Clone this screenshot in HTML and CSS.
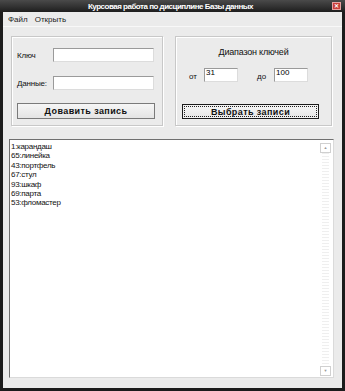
FILE: index.html
```html
<!DOCTYPE html>
<html lang="ru">
<head>
    <meta charset="UTF-8">
    <title>Курсовая работа по дисциплине Базы данных</title>
    <link rel="stylesheet" href="styles.css">
</head>
<body>
    <div class="window">
        <div class="titlebar">
            <span></span>
            <span class="title">Курсовая работа по дисциплине Базы данных</span>
            <span class="close">&#x2715;</span>
        </div>
        <div class="frame">
            <div class="menubar">
                <span>Файл</span>
                <span>Открыть</span>
            </div>
            <div class="content">
                <div class="groups">
                    <div class="group addGroup">
                        <div class="fieldRow">
                            <label for="keyInput">Ключ</label>
                            <input type="text" id="keyInput" class="field">
                        </div>
                        <div class="fieldRow">
                            <label for="dataInput">Данные:</label>
                            <input type="text" id="dataInput" class="field">
                        </div>
                        <button class="winButton">Довавить запись</button>
                    </div>
                    <div class="group rangeGroup">
                        <div class="rangeTitle">Диапазон ключей</div>
                        <div class="rangeRow">
                            <span class="rangeLabel">от</span>
                            <input type="text" class="field small" value="31">
                            <span class="rangeLabel to">до</span>
                            <input type="text" class="field small" value="100">
                        </div>
                        <button class="winButton focused">Выбрать записи</button>
                    </div>
                </div>
                <div class="listBox">
                    <ul class="items">
                        <li>1:карандаш</li>
                        <li>65:линейка</li>
                        <li>43:портфель</li>
                        <li>67:стул</li>
                        <li>93:шкаф</li>
                        <li>69:парта</li>
                        <li>53:фломастер</li>
                    </ul>
                    <div class="scrollbar">
                        <div class="arrow">&#9650;</div>
                        <div class="track"></div>
                        <div class="arrow">&#9660;</div>
                    </div>
                </div>
            </div>
        </div>
    </div>
</body>
</html>
```

FILE: styles.css
```css
* {
  box-sizing: border-box;
  margin: 0;
  padding: 0;
  list-style: none;
}

body {
  width: 345px;
  height: 391px;
  overflow: hidden;
  background-color: #ffffff;
  font-family: "Liberation Sans", Arial, sans-serif;
  font-size: 8px;
  color: #111111;
}

.window {
  width: 345px;
  height: 391px;
  display: flex;
  flex-direction: column;
}

.titlebar {
  height: 12px;
  display: grid;
  grid-template-columns: 1fr auto 1fr;
  align-items: center;
  background: linear-gradient(#4a4a4a, #1e1e1e);
  padding: 0 4px 0 0;
}

.title {
  color: #ffffff;
  font-weight: bold;
  font-size: 8px;
  letter-spacing: -0.5px;
}

.close {
  justify-self: end;
  width: 9px;
  height: 8px;
  background-color: #c8403a;
  border: 1px solid #e8a0a0;
  color: #ffffff;
  font-size: 6px;
  line-height: 6px;
  text-align: center;
  font-weight: bold;
}

.frame {
  flex: 1;
  display: flex;
  flex-direction: column;
  background-color: #ebebeb;
  border-left: 3px solid #1c1c1c;
  border-right: 3px solid #1c1c1c;
  border-bottom: 3px solid #1c1c1c;
}

.menubar {
  height: 15px;
  display: flex;
  align-items: center;
  gap: 7px;
  padding-left: 5px;
  border-bottom: 1px solid #f8f8f8;
  font-size: 8px;
  color: #222222;
}

.content {
  flex: 1;
  display: flex;
  flex-direction: column;
  padding: 9px 8px 6px 6px;
}

.groups {
  display: flex;
  gap: 12px;
  margin: 0 2px;
  height: 90px;
}

.group {
  border: 1px solid #c8c8c8;
  box-shadow: inset 1px 1px 0 #ffffff, 1px 1px 0 #ffffff;
}

.addGroup {
  width: 152px;
  padding: 11px 0 0 5px;
}

.fieldRow {
  display: flex;
  align-items: center;
  margin-bottom: 14px;
}

.fieldRow label {
  width: 36px;
  font-size: 8px;
  letter-spacing: -0.2px;
}

.field {
  height: 14px;
  width: 101px;
  background-color: #ffffff;
  border: 1px solid #9a9a9a;
  border-right-color: #dcdcdc;
  border-bottom-color: #dcdcdc;
  font-family: "Liberation Sans", Arial, sans-serif;
  font-size: 8px;
  padding: 0 2px 4px;
  outline: 0;
}

.winButton {
  display: block;
  width: 138px;
  height: 16px;
  margin-top: -1px;
  background: linear-gradient(#f6f6f6, #e4e4e4);
  border: 1px solid #7a7a7a;
  font-family: "Liberation Sans", Arial, sans-serif;
  font-weight: bold;
  font-size: 9px;
  letter-spacing: 0.4px;
  color: #111111;
}

.rangeGroup {
  width: 157px;
  padding: 10px 0 0 6px;
}

.rangeTitle {
  text-align: center;
  font-size: 9px;
  letter-spacing: -0.2px;
  margin-right: 6px;
  height: 12px;
}

.rangeRow {
  display: flex;
  align-items: flex-end;
  margin-top: 9px;
  height: 14px;
}

.rangeLabel {
  width: 22px;
  padding-left: 7px;
  font-size: 8px;
  line-height: 10px;
}

.rangeLabel.to {
  width: 36px;
  padding-left: 19px;
}

.field.small {
  width: 34px;
  height: 14px;
  padding: 0 1px 5px;
}

.rangeGroup .winButton {
  width: 137px;
  height: 15px;
  margin-top: 22px;
}

.winButton.focused {
  border: 1px solid #1a1a1a;
  box-shadow: inset 0 0 0 1px #f0f0f0;
  outline: 1px dotted #222222;
  outline-offset: -3px;
}

.listBox {
  margin-top: 13px;
  height: 239px;
  display: flex;
  background-color: #ffffff;
  border: 1px solid #dadada;
  border-top-color: #707070;
  border-left-color: #707070;
}

.items {
  flex: 1;
  padding: 2px 0 0 1px;
}

.items li {
  height: 9.4px;
  line-height: 9.4px;
  font-size: 8px;
  letter-spacing: -0.3px;
}

.scrollbar {
  width: 13px;
  display: flex;
  flex-direction: column;
  padding: 3px 2px 1px 0;
}

.arrow {
  height: 10px;
  border: 1px solid #d0d0d0;
  color: #9a9a9a;
  font-size: 4px;
  line-height: 8px;
  text-align: center;
}

.track {
  flex: 1;
  margin: 0 2px;
  background-image: repeating-linear-gradient(#efefef 0 1px, #ffffff 1px 3px);
}
```
